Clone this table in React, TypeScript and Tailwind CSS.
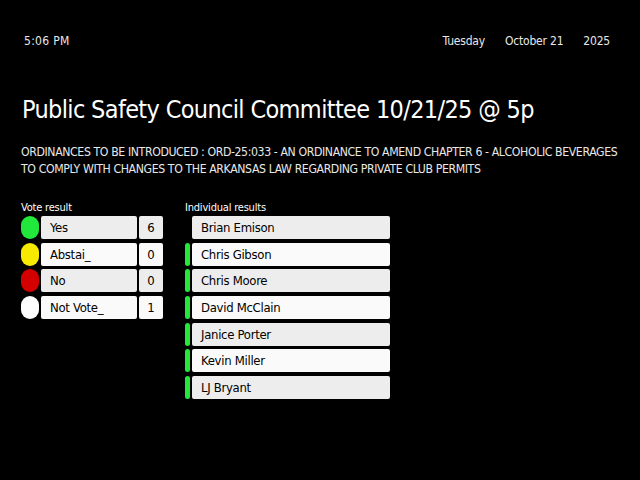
import React from "react";

const votes = [
  { label: "Yes", count: 6, dot: "bg-[#22e83c]", box: "bg-[#ededed]" },
  { label: "Abstai_", count: 0, dot: "bg-[#f5ea00]", box: "bg-[#fafafa]" },
  { label: "No", count: 0, dot: "bg-[#d40000]", box: "bg-[#ededed]" },
  { label: "Not Vote_", count: 1, dot: "bg-white", box: "bg-[#fafafa]" },
];

const members = [
  { name: "Brian Emison", voted: false },
  { name: "Chris Gibson", voted: true },
  { name: "Chris Moore", voted: true },
  { name: "David McClain", voted: true },
  { name: "Janice Porter", voted: true },
  { name: "Kevin Miller", voted: true },
  { name: "LJ Bryant", voted: true },
];

export default function App() {
  return (
    <div className="w-[640px] h-[480px] bg-black text-white font-['DejaVu_Sans_Condensed','DejaVu_Sans',sans-serif] font-stretch-condensed overflow-hidden">
      {/* Top bar */}
      <div className="flex items-center justify-between pl-[24px] pr-[30px] pt-[33px] text-[12px] leading-[16px] text-[#e8e8e8]">
        <span className="tracking-[0.3px]">5:06 PM</span>
        <div className="flex gap-[20px] tracking-[-0.2px]">
          <span>Tuesday</span>
          <span>October 21</span>
          <span>2025</span>
        </div>
      </div>

      {/* Title */}
      <h1 className="mt-[46px] ml-[22px] text-[25px] leading-[30px] tracking-[-0.65px] text-white">
        Public Safety Council Committee 10/21/25 @ 5p
      </h1>

      <p className="mt-[19px] ml-[21px] whitespace-nowrap text-[12.2px] leading-[17px] tracking-[-0.39px] text-[#e8e8e8]">
        ORDINANCES TO BE INTRODUCED : ORD-25:033 - AN ORDINANCE TO AMEND CHAPTER 6 - ALCOHOLIC BEVERAGES
        <br />
        TO COMPLY WITH CHANGES TO THE ARKANSAS LAW REGARDING PRIVATE CLUB PERMITS
      </p>

      <div className="mt-[23px] flex">
        {/* Vote result */}
        <div className="ml-[21px] w-[143px]">
          <div className="text-[11px] leading-[14px] tracking-[-0.2px] text-white">Vote result</div>
          <div className="mt-[1px] flex flex-col gap-[3.67px]">
            {votes.map((v) => (
              <div key={v.label} className="flex items-center h-[23px]">
                <div className={`w-[18px] h-[23px] rounded-full ${v.dot}`} />
                <div className={`ml-[2px] w-[96px] h-[23px] rounded-[2px] ${v.box} text-black text-[13px] leading-[23px] tracking-[-0.3px] pl-[9px]`}>
                  {v.label}
                </div>
                <div className={`ml-[2px] w-[24px] h-[23px] rounded-[2px] ${v.box} text-black text-[13px] leading-[23px] text-center`}>
                  {v.count}
                </div>
              </div>
            ))}
          </div>
        </div>

        {/* Individual results */}
        <div className="ml-[21px] w-[206px]">
          <div className="text-[11px] leading-[14px] tracking-[-0.2px] text-white">Individual results</div>
          <div className="mt-[1px] flex flex-col gap-[3.67px]">
            {members.map((m, i) => (
              <div key={m.name} className="flex items-center h-[23px]">
                <div className={`w-[5px] h-[23px] rounded-[3px] ${m.voted ? "bg-[#22e83c]" : "bg-black"}`} />
                <div
                  className={`ml-[2px] w-[198px] h-[23px] rounded-[2px] ${i % 2 === 0 ? "bg-[#ededed]" : "bg-[#fafafa]"} text-black text-[13px] leading-[23px] tracking-[-0.3px] pl-[9px]`}
                >
                  {m.name}
                </div>
              </div>
            ))}
          </div>
        </div>
      </div>
    </div>
  );
}
